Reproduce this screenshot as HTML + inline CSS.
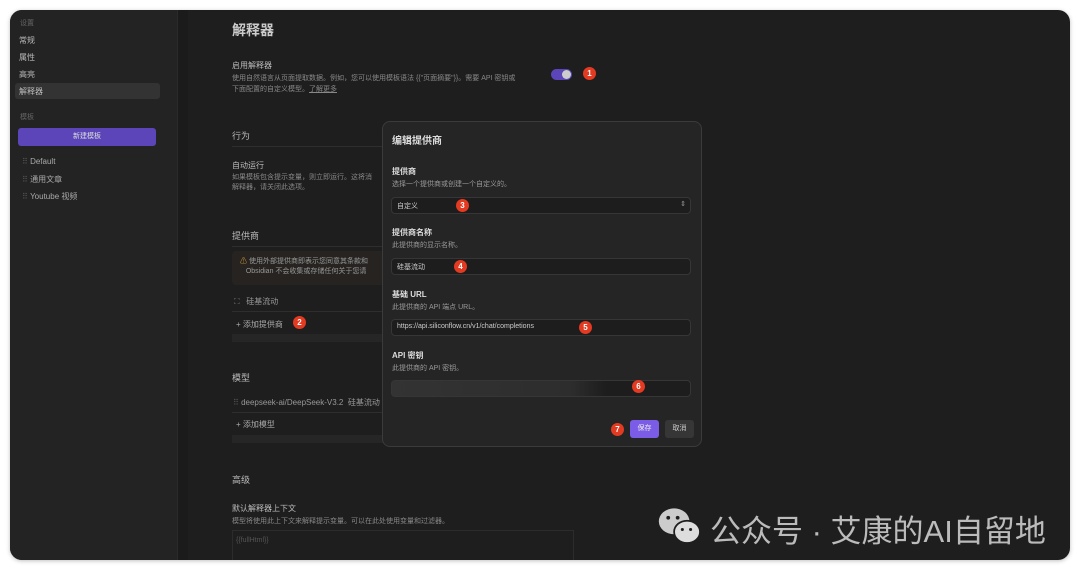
<!DOCTYPE html><html><head><meta charset="utf-8"><style>
*{margin:0;padding:0;box-sizing:border-box}
body{width:1080px;height:570px;background:#fff;font-family:"Liberation Sans","Noto Sans CJK SC",sans-serif;position:relative;overflow:hidden;color:#ccc}
.win{position:absolute;left:10px;top:10px;width:1060px;height:550px;background:#1e1e1e;border-radius:12px;overflow:hidden;box-shadow:0 1px 4px rgba(0,0,0,.25)}
.side{position:absolute;left:0;top:0;width:168px;height:550px;background:#232323;border-right:1px solid #2a2a2a}
.a{position:absolute;white-space:nowrap}
.t8{font-size:8px}.t7{font-size:7px}.t9{font-size:9px}
.b{position:absolute;width:13px;height:13px;border-radius:50%;background:#e33a22;color:#fff;font-size:8px;line-height:13px;text-align:center;font-weight:bold}
.line{position:absolute;height:1px;background:#2e2e2e}
.inp{position:absolute;left:8px;width:300px;height:17px;background:#1d1d1d;border:1px solid #363636;border-radius:4px}
</style></head><body>
<div class="win">
<div class="side">
<div class="a t7" style="left:10px;top:8px;color:#666">设置</div>
<div class="a t8" style="left:9px;top:25px;color:#bbb">常规</div>
<div class="a t8" style="left:9px;top:42px;color:#bbb">属性</div>
<div class="a t8" style="left:9px;top:59px;color:#bbb">高亮</div>
<div style="position:absolute;left:5px;top:73px;width:145px;height:16px;background:#333;border-radius:3px"></div>
<div class="a t8" style="left:9px;top:76px;color:#bbb">解释器</div>
<div class="a t7" style="left:10px;top:102px;color:#666">模板</div>
<div style="position:absolute;left:8px;top:118px;width:138px;height:18px;background:#5b45b8;border-radius:3px;color:#ddd;font-size:7px;text-align:center;line-height:18px">新建模板</div>
<div class="a t8" style="left:12px;top:147px;color:#aaa"><span style="color:#555">⠿</span> Default</div>
<div class="a t8" style="left:12px;top:164px;color:#aaa"><span style="color:#555">⠿</span> 通用文章</div>
<div class="a t8" style="left:12px;top:181px;color:#aaa"><span style="color:#555">⠿</span> Youtube 视频</div>
</div>
<div style="position:absolute;left:168px;top:0;width:10px;height:550px;background:#1b1b1b"></div>
<div class="a" style="left:222px;top:10px;font-size:14px;font-weight:bold;color:#ccc">解释器</div>
<div class="a t8" style="left:222px;top:50px;color:#bbb">启用解释器</div>
<div class="a t7" style="left:222px;top:63px;color:#888;line-height:11px">使用自然语言从页面提取数据。例如，您可以使用模板语法 {{"页面摘要"}}。需要 API 密钥或<br>下面配置的自定义模型。<u>了解更多</u></div>
<div style="position:absolute;left:541px;top:59px;width:21px;height:11px;border-radius:6px;background:#5b45b8"><div style="position:absolute;right:1px;top:1px;width:9px;height:9px;border-radius:50%;background:#ccc"></div></div>
<div class="b" style="left:573px;top:57px">1</div>
<div class="a t9" style="left:222px;top:119px;color:#bbb">行为</div>
<div class="line" style="left:222px;top:136px;width:340px"></div>
<div class="a t8" style="left:222px;top:150px;color:#bbb">自动运行</div>
<div class="a t7" style="left:222px;top:163px;color:#888;line-height:10px">如果模板包含提示变量，则立即运行。这将消<br>解释器，请关闭此选项。</div>
<div class="a t9" style="left:222px;top:219px;color:#bbb">提供商</div>
<div class="line" style="left:222px;top:236px;width:340px"></div>
<div style="position:absolute;left:222px;top:241px;width:160px;height:34px;background:#262320;border-radius:4px"></div>
<div class="a t7" style="left:230px;top:247px;color:#999;line-height:10px"><span style="color:#c9963a">⚠</span> 使用外部提供商即表示您同意其条款和<br>&nbsp;&nbsp;&nbsp;Obsidian 不会收集或存储任何关于您请</div>
<div class="a t8" style="left:224px;top:286px;color:#999"><span style="color:#777">⛶</span>&nbsp;&nbsp;&nbsp;硅基流动</div>
<div class="line" style="left:222px;top:301px;width:160px"></div>
<div class="a t8" style="left:226px;top:309px;color:#aaa">+ 添加提供商</div>
<div class="b" style="left:283px;top:306px">2</div>
<div style="position:absolute;left:222px;top:324px;width:160px;height:8px;background:#262626"></div>
<div class="a t9" style="left:222px;top:361px;color:#bbb">模型</div>
<div class="a t8" style="left:223px;top:387px;color:#999"><span style="color:#555">⠿</span> deepseek-ai/DeepSeek-V3.2&nbsp; 硅基流动</div>
<div class="line" style="left:222px;top:402px;width:160px"></div>
<div class="a t8" style="left:226px;top:409px;color:#aaa">+ 添加模型</div>
<div style="position:absolute;left:222px;top:425px;width:160px;height:8px;background:#262626"></div>
<div class="a t9" style="left:222px;top:463px;color:#bbb">高级</div>
<div class="a t8" style="left:222px;top:493px;color:#bbb">默认解释器上下文</div>
<div class="a t7" style="left:222px;top:506px;color:#888">模型将使用此上下文来解释提示变量。可以在此处使用变量和过滤器。</div>
<div style="position:absolute;left:222px;top:520px;width:342px;height:30px;border:1px solid #2c2c2c;border-bottom:none"></div>
<div class="a t7" style="left:226px;top:527px;color:#555">{{fullHtml}}</div>
<div style="position:absolute;left:372px;top:111px;width:320px;height:326px;background:#252525;border:1px solid #3b3b3b;border-radius:8px">
<div class="a" style="left:9px;top:10px;font-size:10px;font-weight:bold;color:#ddd">编辑提供商</div>
<div class="a t8" style="left:9px;top:44px;font-weight:bold;color:#ddd">提供商</div>
<div class="a t7" style="left:9px;top:57px;color:#999">选择一个提供商或创建一个自定义的。</div>
<div class="inp" style="top:75px"><span class="a t7" style="left:5px;top:3px;color:#ccc">自定义</span><span class="a t7" style="right:4px;top:2px;color:#999">⇕</span></div>
<div class="b" style="left:73px;top:77px">3</div>
<div class="a t8" style="left:9px;top:105px;font-weight:bold;color:#ddd">提供商名称</div>
<div class="a t7" style="left:9px;top:118px;color:#999">此提供商的显示名称。</div>
<div class="inp" style="top:136px"><span class="a t7" style="left:5px;top:3px;color:#ccc">硅基流动</span></div>
<div class="b" style="left:71px;top:138px">4</div>
<div class="a t8" style="left:9px;top:167px;font-weight:bold;color:#ddd">基础 URL</div>
<div class="a t7" style="left:9px;top:180px;color:#999">此提供商的 API 端点 URL。</div>
<div class="inp" style="top:197px"><span class="a t7" style="left:5px;top:3px;color:#ccc">https://api.siliconflow.cn/v1/chat/completions</span></div>
<div class="b" style="left:196px;top:199px">5</div>
<div class="a t8" style="left:9px;top:228px;font-weight:bold;color:#ddd">API 密钥</div>
<div class="a t7" style="left:9px;top:241px;color:#999">此提供商的 API 密钥。</div>
<div class="inp" style="top:258px;background:linear-gradient(90deg,#333 0%,#2d2d2d 60%,#1d1d1d 72%)"></div>
<div class="b" style="left:249px;top:258px">6</div>
<div class="b" style="left:228px;top:301px">7</div>
<div style="position:absolute;left:247px;top:298px;width:29px;height:18px;background:#7b5ce6;border-radius:3px;color:#eee;font-size:7px;text-align:center;line-height:18px">保存</div>
<div style="position:absolute;left:282px;top:298px;width:29px;height:18px;background:#363636;border-radius:3px;color:#ccc;font-size:7px;text-align:center;line-height:18px">取消</div>
</div>
<svg class="a" style="left:646px;top:496px" width="48" height="40" viewBox="0 0 38 34"><ellipse cx="14" cy="13" rx="13" ry="11" fill="#ccc"/><ellipse cx="25" cy="22" rx="11" ry="9.5" fill="#ddd" stroke="#1e1e1e" stroke-width="1.5"/><circle cx="9" cy="10" r="1.6" fill="#1e1e1e"/><circle cx="17" cy="10" r="1.6" fill="#1e1e1e"/><circle cx="21" cy="20" r="1.3" fill="#1e1e1e"/><circle cx="28" cy="20" r="1.3" fill="#1e1e1e"/></svg>
<div class="a" style="left:700px;top:496px;font-size:31px;color:#bbb">公众号 · 艾康的AI自留地</div>
</div>
</body></html>
